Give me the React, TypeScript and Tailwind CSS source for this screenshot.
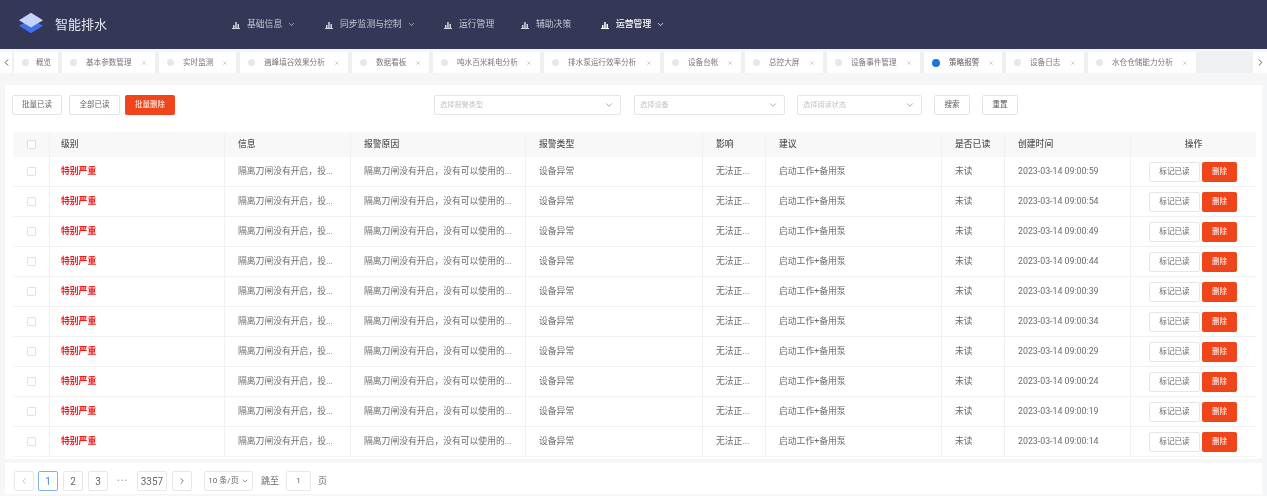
import { ChevronDown, ChevronLeft, ChevronRight, X } from "lucide-react";

const navItems = [
  { label: "基础信息", arrow: true, width: "w-[93px]" },
  { label: "同步监测与控制", arrow: true, width: "w-[119px]" },
  { label: "运行管理", arrow: false, width: "w-[77px]" },
  { label: "辅助决策", arrow: false, width: "w-[80px]" },
  { label: "运营管理", arrow: true, active: true, width: "w-[80px]" },
];

const tabs = [
  { label: "概览", width: "w-[44px]", close: false },
  { label: "基本参数管理", width: "w-[93px]", close: true },
  { label: "实时监测", width: "w-[77px]", close: true },
  { label: "遍峰填谷效果分析", width: "w-[108px]", close: true },
  { label: "数据看板", width: "w-[77px]", close: true },
  { label: "吨水百米耗电分析", width: "w-[107px]", close: true },
  { label: "排水泵运行效率分析", width: "w-[116px]", close: true },
  { label: "设备台帐", width: "w-[77px]", close: true },
  { label: "总控大屏", width: "w-[78px]", close: true },
  { label: "设备事件管理", width: "w-[93px]", close: true },
  { label: "策略报警", width: "w-[78px]", close: true, active: true },
  { label: "设备日志", width: "w-[78px]", close: true },
  { label: "水仓仓储能力分析", width: "w-[108px]", close: true },
];

const times = ["59", "54", "49", "44", "39", "34", "29", "24", "19", "14"];

function NavIcon({ active }: { active?: boolean }) {
  return (
    <svg width="8" height="8" viewBox="0 0 8 8" className={active ? "text-white" : "text-gray-300"}>
      <path d="M0 7h8v1H0zM1 4h1.5v3H1zM3.2 1h1.5v6H3.2zM5.5 3H7v4H5.5z" fill="currentColor" />
    </svg>
  );
}

function Logo() {
  return (
    <svg width="26" height="24" viewBox="0 0 28 26" className="-mt-[4px]">
      <path d="M14 9 L27 16 L14 24 L1 16 Z" fill="#3f6ff0" />
      <path d="M14 2 L27 10 L14 18 L1 10 Z" fill="#c5d3fb" />
    </svg>
  );
}

function Select({ placeholder, width }: { placeholder: string; width: string }) {
  return (
    <div className={`${width} h-[20px] border border-[#e6e6e6] rounded-[2px] bg-white flex items-center justify-between pl-[5px] pr-[6px] text-[7.2px] text-[#c4c4c4]`}>
      <span>{placeholder}</span>
      <ChevronDown size={10} className="text-[#999]" />
    </div>
  );
}

function Cell({ children, className = "" }: { children?: React.ReactNode; className?: string }) {
  return <div className={`flex items-center pl-[13px] border-r border-[#f1f1f1] overflow-hidden whitespace-nowrap ${className}`}>{children}</div>;
}

const rowGrid = "grid grid-cols-[37px_175px_126px_175px_177px_63px_176px_63px_126px_125px]";

export default function App() {
  return (
    <div className="relative w-[1267px] h-[496px] overflow-hidden bg-[#f5f6f7] blur-[0.3px] font-['Roboto','Noto_Sans_CJK_SC',sans-serif] text-[#6b6b6b]">
      <header className="h-[49px] bg-[#343856] flex items-center">
        <div className="w-[217px] flex items-center pl-[18px] gap-[11px]">
          <Logo />
          <span className="text-[13px] text-[#e4e6ee]">智能排水</span>
        </div>
        <nav className="flex items-center pl-[15px]">
          {navItems.map((n) => (
            <div key={n.label} className={`${n.width} flex items-center gap-[7px] text-[8.8px] ${n.active ? "text-white font-medium" : "text-[#c4c7d6]"}`}>
              <NavIcon active={n.active} />
              <span>{n.label}</span>
              {n.arrow && <ChevronDown size={9} className="-ml-[2px]" />}
            </div>
          ))}
        </nav>
      </header>

      <div className="mt-[3px] h-[21px] flex items-center bg-[#eef0f2]">
        <div className="w-[12px] h-full bg-white flex items-center justify-center">
          <ChevronLeft size={11} className="text-[#555]" />
        </div>
        <div className="flex-1 flex items-center gap-[4px] pl-[2px]">
          {tabs.map((t) => (
            <div key={t.label} className={`${t.width} h-[21px] bg-white flex items-center pl-[8px] text-[7.6px] text-[#777] whitespace-nowrap`}>
              <span className={`${t.active ? "bg-[#1f74e0] w-[8px] h-[8px]" : "bg-[#e5e7ea] w-[7px] h-[7px]"} rounded-full shrink-0 ${t.close ? "mr-[9px]" : "mr-[7px]"}`} />
              <span className={t.active ? "text-[#555]" : ""}>{t.label}</span>
              {t.close && <X size={6} className="ml-auto mr-[8px] text-[#aaa] shrink-0" />}
            </div>
          ))}
        </div>
        <div className="w-[14px] h-full bg-white flex items-center justify-center">
          <ChevronRight size={11} className="text-[#555]" />
        </div>
      </div>

      <main className="mx-[5px] mt-[12px] bg-white h-[374px] pl-[8px] pr-[6px] pt-[10px]">
        <div className="h-[20px] flex items-center text-[7.5px] -ml-[1px]">
          <button className="w-[50px] h-[20px] border border-[#e4e4e4] rounded-[2px] text-[#666] bg-white">批量已读</button>
          <button className="w-[51px] h-[20px] ml-[7px] border border-[#e4e4e4] rounded-[2px] text-[#666] bg-white">全部已读</button>
          <button className="w-[50px] h-[20px] ml-[5px] rounded-[2px] text-white bg-[#f0441a]">批量删除</button>
          <div className="ml-[259px]"><Select placeholder="选择报警类型" width="w-[187px]" /></div>
          <div className="ml-[13px]"><Select placeholder="选择设备" width="w-[151px]" /></div>
          <div className="ml-[12px]"><Select placeholder="选择阅读状态" width="w-[125px]" /></div>
          <button className="w-[36px] h-[20px] ml-[12px] border border-[#e4e4e4] rounded-[2px] text-[#555] bg-white">搜索</button>
          <button className="w-[36px] h-[20px] ml-[12px] border border-[#e4e4e4] rounded-[2px] text-[#555] bg-white">重置</button>
        </div>

        <div className="mt-[17px] text-[8.8px]">
          <div className={`${rowGrid} h-[25px] bg-[#f8f8f8] font-medium text-[#555]`}>
            <div className="flex items-center justify-center border-r border-[#f1f1f1]">
              <span className="w-[9px] h-[9px] border border-[#dcdcdc] bg-white rounded-[1px]" />
            </div>
            <Cell className="!pl-[11px]">级别</Cell>
            <Cell>信息</Cell>
            <Cell>报警原因</Cell>
            <Cell>报警类型</Cell>
            <Cell>影响</Cell>
            <Cell>建议</Cell>
            <Cell>是否已读</Cell>
            <Cell>创建时间</Cell>
            <div className="flex items-center justify-center">操作</div>
          </div>
          {times.map((s) => (
            <div key={s} className={`${rowGrid} h-[30px] border-b border-[#f1f1f1]`}>
              <div className="flex items-center justify-center border-r border-[#f1f1f1]">
                <span className="w-[9px] h-[9px] border border-[#e2e2e2] bg-white rounded-[1px]" />
              </div>
              <Cell className="!pl-[11px] text-[#f01c1c] font-bold">特别严重</Cell>
              <Cell>隔离刀闸没有开启，投...</Cell>
              <Cell>隔离刀闸没有开启，没有可以使用的...</Cell>
              <Cell>设备异常</Cell>
              <Cell>无法正...</Cell>
              <Cell>启动工作+备用泵</Cell>
              <Cell>未读</Cell>
              <Cell>2023-03-14 09:00:{s}</Cell>
              <div className="flex items-center pl-[18px] gap-[2px] text-[7.6px]">
                <button className="w-[51px] h-[20px] border border-[#e8e8e8] rounded-[2px] bg-white text-[#666]">标记已读</button>
                <button className="w-[35px] h-[20px] rounded-[2px] bg-[#f0441a] text-white">删除</button>
              </div>
            </div>
          ))}
        </div>
      </main>

      <footer className="mx-[5px] mt-[4px] h-[31px] bg-white flex items-start pt-[8px] pl-[9px] text-[10px] text-[#666]">
        <span className="w-[20px] h-[20px] border border-[#e8e8e8] rounded-[2px] flex items-center justify-center text-[#bbb]"><ChevronLeft size={10} /></span>
        <span className="w-[20px] h-[20px] ml-[4px] border border-[#7fb0e8] rounded-[2px] flex items-center justify-center text-[#3f87d8]">1</span>
        <span className="w-[20px] h-[20px] ml-[5px] border border-[#e8e8e8] rounded-[2px] flex items-center justify-center">2</span>
        <span className="w-[20px] h-[20px] ml-[5px] border border-[#e8e8e8] rounded-[2px] flex items-center justify-center">3</span>
        <span className="w-[29px] h-[20px] leading-[20px] text-center text-[#aaa] text-[8px] tracking-[1px]">•••</span>
        <span className="w-[30px] h-[20px] border border-[#e8e8e8] rounded-[2px] flex items-center justify-center">3357</span>
        <span className="w-[20px] h-[20px] ml-[5px] border border-[#e8e8e8] rounded-[2px] flex items-center justify-center"><ChevronRight size={10} /></span>
        <span className="w-[49px] h-[20px] ml-[12px] border border-[#e8e8e8] rounded-[2px] flex items-center justify-center gap-[2px] text-[8px]">10 条/页<ChevronDown size={8} /></span>
        <span className="ml-[8px] h-[20px] leading-[20px] text-[9px]">跳至</span>
        <span className="w-[25px] h-[20px] ml-[7px] border border-[#e8e8e8] rounded-[2px] flex items-center justify-center text-[8px]">1</span>
        <span className="ml-[7px] h-[20px] leading-[20px] text-[9px]">页</span>
      </footer>
    </div>
  );
}
